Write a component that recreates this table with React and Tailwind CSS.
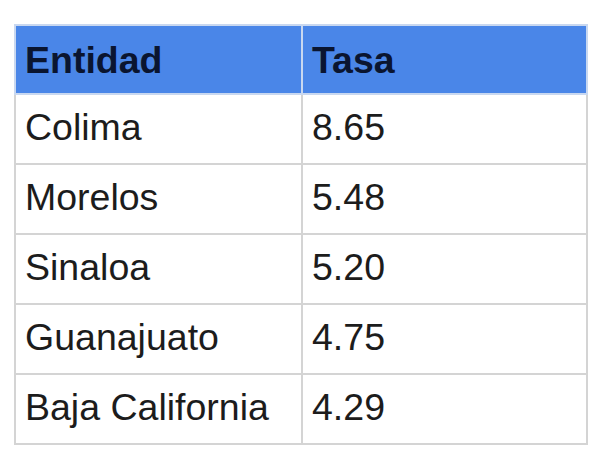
const rows = [
  ["Colima", "8.65"],
  ["Morelos", "5.48"],
  ["Sinaloa", "5.20"],
  ["Guanajuato", "4.75"],
  ["Baja California", "4.29"],
];

export default function App() {
  return (
    <div
      className="w-[600px] h-[467px] bg-white pl-[14px] pt-[24px]"
      style={{ fontFamily: '"Liberation Sans", Arial, sans-serif' }}
    >
      <table className="border-collapse w-[574px] table-fixed">
        <thead>
          <tr className="h-[69px] bg-[#4a86e8]">
            <th className="w-[287px] border-2 border-[#c9d8f0] text-left font-bold text-[37.5px] leading-none text-[#0a1530] pl-[9px] pt-[2px]">
              Entidad
            </th>
            <th className="border-2 border-[#c9d8f0] text-left font-bold text-[37.5px] leading-none text-[#0a1530] pl-[9px] pt-[2px]">
              Tasa
            </th>
          </tr>
        </thead>
        <tbody>
          {rows.map(([name, rate]) => (
            <tr key={name} className="h-[70px]">
              <td className="border-2 border-[#d4d4d4] text-[37.5px] leading-none text-[#1c1c1c] pl-[9px] pb-[2px]">
                {name}
              </td>
              <td className="border-2 border-[#d4d4d4] text-[37.5px] leading-none text-[#1c1c1c] pl-[9px] pb-[2px]">
                {rate}
              </td>
            </tr>
          ))}
        </tbody>
      </table>
    </div>
  );
}
